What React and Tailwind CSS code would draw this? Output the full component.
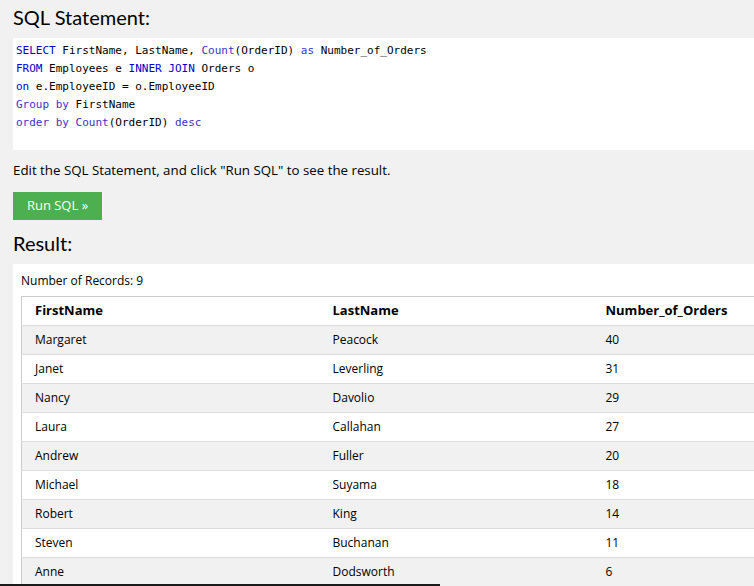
import React from "react";

const rows = [
  ["Margaret", "Peacock", 40],
  ["Janet", "Leverling", 31],
  ["Nancy", "Davolio", 29],
  ["Laura", "Callahan", 27],
  ["Andrew", "Fuller", 20],
  ["Michael", "Suyama", 18],
  ["Robert", "King", 14],
  ["Steven", "Buchanan", 11],
  ["Anne", "Dodsworth", 6],
];

const K = ({ children }) => <span className="text-[#0000cd]">{children}</span>;
const F = ({ children }) => <span className="text-[#3a32c8]">{children}</span>;

const App = () => {
  return (
    <div className="relative h-[586px] w-full overflow-hidden bg-[#f1f1f1] pl-[13px] font-['Open_Sans',sans-serif] text-black">
      <h2 className="pt-[4px] font-['Lato',sans-serif] text-[20px] leading-[26px]">SQL Statement:</h2>

      <div className="mt-[8px] h-[112px] bg-white pl-[3px] pt-[4px] font-['DejaVu_Sans_Mono',monospace] text-[11px] leading-[18px] whitespace-pre">
        <div>
          <K>SELECT</K> FirstName, LastName, <F>Count</F>(OrderID) <F>as</F> Number_of_Orders
        </div>
        <div>
          <K>FROM</K> Employees e <K>INNER JOIN</K> Orders o
        </div>
        <div>
          <K>on</K> e.EmployeeID = o.EmployeeID
        </div>
        <div>
          <F>Group by</F> FirstName
        </div>
        <div>
          <F>order by</F> <F>Count</F>(OrderID) <F>desc</F>
        </div>
      </div>

      <p className="mt-[11px] text-[13.3px] leading-[18px]">
        Edit the SQL Statement, and click "Run SQL" to see the result.
      </p>

      <button className="mt-[13px] flex h-[28px] w-[89px] items-center justify-center bg-[#4caf50] text-[13px] text-white">
        Run SQL »
      </button>

      <h2 className="mt-[10px] font-['Lato',sans-serif] text-[20px] leading-[26px]">Result:</h2>

      <div className="mt-[8px] bg-white pl-[8px] pt-[9px]">
        <div className="text-[12px] leading-[16px]">Number of Records: 9</div>
        <table className="mt-[7px] w-[760px] border-collapse border-t border-l border-[#cccccc] text-[12px]">
          <thead>
            <tr className="h-[29px] border-b border-[#dddddd] bg-white text-left text-[13px]">
              <th className="w-[298px] pl-[13px] font-bold">FirstName</th>
              <th className="w-[273px] pl-[13px] font-bold">LastName</th>
              <th className="pl-[13px] font-bold">Number_of_Orders</th>
            </tr>
          </thead>
          <tbody>
            {rows.map(([first, last, n], i) => (
              <tr
                key={first}
                className={`h-[29px] border-b border-[#dddddd] ${i % 2 === 0 ? "bg-[#f1f1f1]" : "bg-white"}`}
              >
                <td className="pl-[13px]">{first}</td>
                <td className="pl-[13px]">{last}</td>
                <td className="pl-[13px]">{n}</td>
              </tr>
            ))}
          </tbody>
        </table>
      </div>

      {/* scrollbar edge */}
      <div className="absolute bottom-0 left-0 h-[2px] w-[440px] bg-[#1a1a1a]" />
    </div>
  );
};

export default App;
